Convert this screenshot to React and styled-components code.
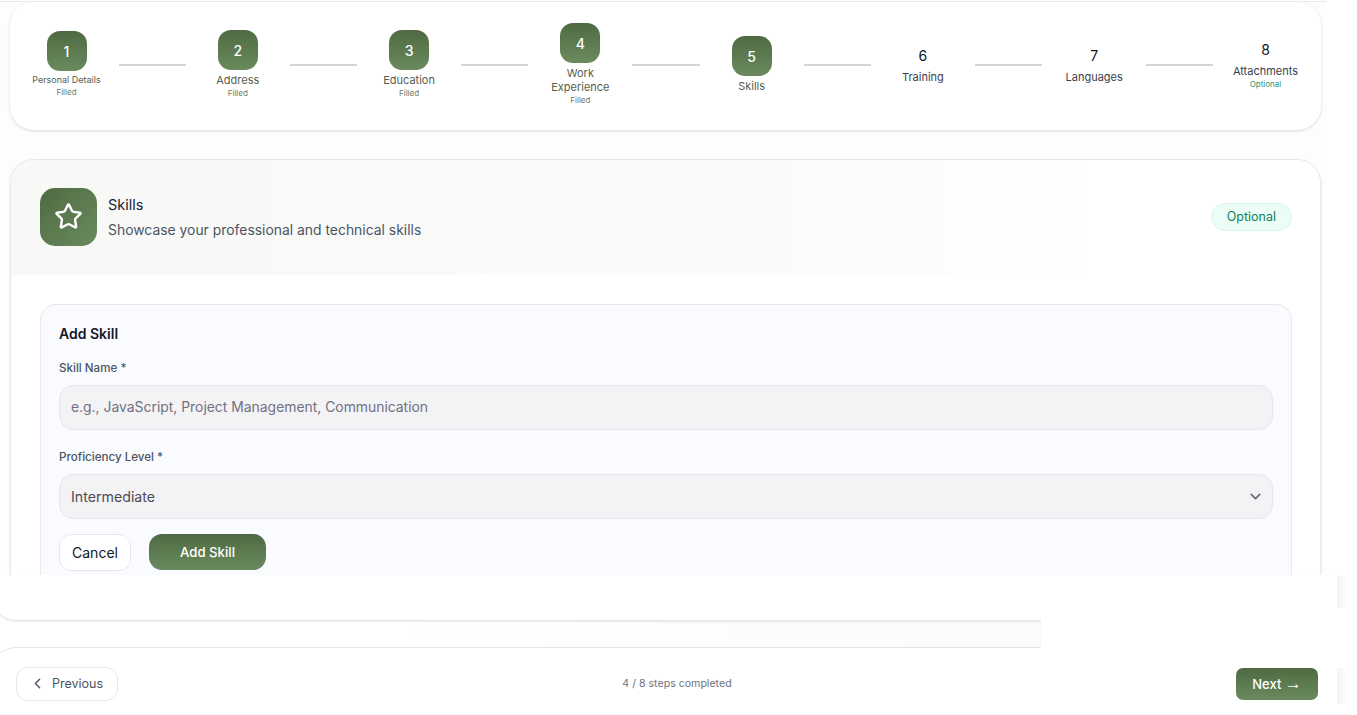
import { Fragment } from 'react';
import styled, { createGlobalStyle } from 'styled-components';
import { Star, ChevronDown, ChevronLeft } from 'lucide-react';

const GlobalStyle = createGlobalStyle`
  html, body {
    margin: 0;
    padding: 0;
    background: #fff;
    overflow: hidden;
  }
  * { box-sizing: border-box; }
  body {
    font-family: Inter, "Noto Sans", "Liberation Sans", sans-serif;
    color: #111827;
  }
`;

const green = 'linear-gradient(180deg, #4f6a42 0%, #6a8a5e 100%)';

const Page = styled.div`
  position: relative;
  width: 1357px;
  height: 715px;
  overflow: hidden;
  background: #fff;
`;

const Upper = styled.div`
  width: 1327px;
  height: 574px;
  margin-top: 1px;
  padding: 0 6px 0 10px;
  border-top: 1px solid #e6ebea;
  background: #fdfdfe;
  overflow: hidden;
`;

const StepperCard = styled.div`
  display: flex;
  align-items: center;
  height: 128px;
  padding: 0 17.5px 3px 18.5px;
  background: #fff;
  border-radius: 24px;
  box-shadow: 0 1px 3px rgba(30, 30, 60, 0.16);
`;

const Step = styled.div`
  display: flex;
  flex-direction: column;
  align-items: center;
  width: 76px;
  flex: none;
  text-align: center;
`;

const Tile = styled.div`
  display: flex;
  align-items: center;
  justify-content: center;
  width: 40px;
  height: 40px;
  border-radius: 13px;
  background: ${green};
  color: #fff;
  font-size: 14px;
  font-weight: 500;
`;

const StepNumber = styled.div`
  height: 21px;
  line-height: 20px;
  font-size: 14px;
  color: #111827;
`;

const StepLabel = styled.div`
  margin-top: 3px;
  font-size: ${p => (p.$small ? '9px' : '11px')};
  line-height: ${p => (p.$small ? '12px' : '14px')};
  color: ${p => (p.$done ? '#56604f' : '#3a4150')};
  white-space: ${p => (p.$wrap ? 'normal' : 'nowrap')};
`;

const StepNote = styled.div`
  font-size: 8px;
  line-height: 12px;
  color: ${p => (p.$optional ? '#2f9270' : '#6f7a68')};
`;

const Connector = styled.div`
  flex: 1;
  height: 2px;
  margin: 0 14px;
  background: #d4d4da;
`;

const FormCard = styled.section`
  margin-top: 29px;
  height: 460px;
  background: #fff;
  border: 1px solid #e8e8ee;
  border-radius: 24px;
  box-shadow: 0 1px 3px rgba(30, 30, 60, 0.08);
  overflow: hidden;
`;

const CardHeader = styled.header`
  display: flex;
  align-items: center;
  height: 115px;
  padding: 0 28px 2px 29px;
  background: linear-gradient(90deg, #f8f9f7 0%, #fafbfa 60%, #ffffff 82%);
`;

const IconTile = styled.div`
  display: flex;
  align-items: center;
  justify-content: center;
  width: 57px;
  height: 58px;
  border-radius: 15px;
  background: linear-gradient(135deg, #4f6a42 0%, #6a8a5e 100%);
  color: #fff;
`;

const HeaderText = styled.div`
  flex: 1;
  margin-left: 11px;
  padding-top: 1px;
`;

const CardTitle = styled.div`
  font-size: 14.5px;
  line-height: 25px;
  color: #1b2333;
`;

const CardSub = styled.div`
  margin-top: 1px;
  font-size: 13.9px;
  line-height: 25px;
  color: #4b5563;
`;

const Badge = styled.span`
  display: flex;
  align-items: center;
  height: 28px;
  padding: 0 15px;
  border-radius: 14px;
  border: 1px solid #d6f8e8;
  background: #ecfdf5;
  color: #0f7f5c;
  font-size: 12.5px;
`;

const CardBody = styled.div`
  padding: 29px 28px 0 29px;
`;

const Panel = styled.div`
  padding: 18px 18px 40px;
  background: #fafbff;
  border: 1px solid #e6e8ee;
  border-radius: 16px;
`;

const PanelTitle = styled.div`
  font-size: 14px;
  line-height: 22px;
  font-weight: 600;
  color: #111827;
`;

const Field = styled.div`
  position: relative;
  margin-top: ${p => (p.$first ? '14px' : '18px')};
`;

const FieldLabel = styled.label`
  display: block;
  margin-bottom: 8px;
  font-size: 11.6px;
  line-height: 18px;
  font-weight: 500;
  color: #4b5563;
`;

const TextInput = styled.input`
  display: block;
  width: 100%;
  height: 45px;
  padding: 0 11px 2px;
  background: #f3f3f5;
  border: 1px solid #e5e7eb;
  border-radius: 14px;
  font: 13.9px Inter, "Noto Sans", sans-serif;
  color: #4b4b57;
  outline: none;
  &::placeholder { color: #717182; opacity: 1; }
`;

const Select = styled(TextInput).attrs({ as: 'select' })`
  appearance: none;
  padding-bottom: 0;
  font-size: 14.2px;
`;

const SelectIcon = styled(ChevronDown)`
  position: absolute;
  right: 9px;
  bottom: 14px;
  color: #6b7280;
  pointer-events: none;
`;

const Actions = styled.div`
  display: flex;
  gap: 18px;
  margin-top: 15px;
`;

const GhostButton = styled.button`
  height: 37px;
  width: 72px;
  border: 1px solid #e5e7eb;
  border-radius: 12px;
  background: #fff;
  color: #111827;
  font: 14px Inter, "Noto Sans", sans-serif;
`;

const PrimaryButton = styled.button`
  height: ${p => (p.$short ? '32px' : '36px')};
  width: ${p => (p.$short ? '82px' : '117px')};
  border: none;
  border-radius: ${p => (p.$short ? '7px' : '13px')};
  background: ${green};
  color: #fff;
  font: ${p => (p.$short ? '500 13px' : '500 13.2px')} Inter, "Noto Sans", sans-serif;
`;

const Arrow = styled.span`
  font-family: "Liberation Sans", sans-serif;
  font-size: 17px;
  line-height: 13px;
`;

const Lower = styled.div`
  height: 140px;
  background: linear-gradient(90deg, #ffffff 30%, #f9f9f9 100%) no-repeat;
  background-size: 100% 73px;
`;

const CardTail = styled.div`
  width: 1346px;
  height: 46px;
  margin-left: -8px;
  background: #fff;
  border-bottom: 1px solid #e4e4ea;
  border-radius: 0 0 24px 24px;
  box-shadow: 0 1px 2px rgba(30, 30, 60, 0.08);
`;

const Footer = styled.footer`
  display: flex;
  align-items: center;
  justify-content: space-between;
  width: 1350px;
  height: 72px;
  margin: 26px 0 0 -8px;
  padding: 0 24px;
  background: #fff;
  border-top: 1px solid #e4e4ea;
  border-radius: 24px 24px 0 0;
`;

const PrevButton = styled.button`
  display: flex;
  align-items: center;
  gap: 6px;
  width: 102px;
  height: 34px;
  padding: 0 0 0 12px;
  background: #fff;
  border: 1px solid #e5e7eb;
  border-radius: 12px;
  color: #4b5563;
  font: 12.5px Inter, "Noto Sans", sans-serif;
`;

const Progress = styled.span`
  font-size: 10.6px;
  color: #6b7280;
`;

// the capture has a pale block painted over the right side of the lower cards
const WhitePatch = styled.div`
  position: absolute;
  left: 1041px;
  top: 575px;
  width: 316px;
  height: 92px;
  background: #fff;
`;

const EdgeStrip = styled.div`
  position: absolute;
  left: 1337px;
  top: ${p => p.$top}px;
  width: 8px;
  height: ${p => p.$height}px;
  background: linear-gradient(90deg, #f4f4f6 0%, #fbfbfb 100%);
`;

const steps = [
  { n: 1, label: 'Personal Details', note: 'Filled', done: true, small: true },
  { n: 2, label: 'Address', note: 'Filled', done: true },
  { n: 3, label: 'Education', note: 'Filled', done: true },
  { n: 4, label: 'Work Experience', note: 'Filled', done: true, wrap: true },
  { n: 5, label: 'Skills', done: true },
  { n: 6, label: 'Training' },
  { n: 7, label: 'Languages' },
  { n: 8, label: 'Attachments', note: 'Optional', optional: true },
];

export default function App() {
  return (
    <Page>
      <GlobalStyle />
      <Upper>
        <StepperCard>
          {steps.map((s, i) => (
            <Fragment key={s.n}>
              {i > 0 && <Connector />}
              <Step>
                {s.done ? <Tile>{s.n}</Tile> : <StepNumber>{s.n}</StepNumber>}
                <StepLabel $small={s.small} $done={s.done} $wrap={s.wrap}>{s.label}</StepLabel>
                {s.note && <StepNote $optional={s.optional}>{s.note}</StepNote>}
              </Step>
            </Fragment>
          ))}
        </StepperCard>

        <FormCard>
          <CardHeader>
            <IconTile>
              <Star size={29} strokeWidth={2} />
            </IconTile>
            <HeaderText>
              <CardTitle>Skills</CardTitle>
              <CardSub>Showcase your professional and technical skills</CardSub>
            </HeaderText>
            <Badge>Optional</Badge>
          </CardHeader>
          <CardBody>
            <Panel>
              <PanelTitle>Add Skill</PanelTitle>
              <Field $first>
                <FieldLabel>Skill Name *</FieldLabel>
                <TextInput placeholder="e.g., JavaScript, Project Management, Communication" />
              </Field>
              <Field>
                <FieldLabel>Proficiency Level *</FieldLabel>
                <Select defaultValue="Intermediate">
                  <option>Beginner</option>
                  <option>Intermediate</option>
                  <option>Advanced</option>
                  <option>Expert</option>
                </Select>
                <SelectIcon size={17} strokeWidth={2.6} />
              </Field>
              <Actions>
                <GhostButton>Cancel</GhostButton>
                <PrimaryButton>Add Skill</PrimaryButton>
              </Actions>
            </Panel>
          </CardBody>
        </FormCard>
      </Upper>

      <Lower>
        <CardTail />
        <Footer>
          <PrevButton>
            <ChevronLeft size={17} strokeWidth={2} />
            Previous
          </PrevButton>
          <Progress>4 / 8 steps completed</Progress>
          <PrimaryButton $short>Next <Arrow>→</Arrow></PrimaryButton>
        </Footer>
      </Lower>

      <WhitePatch />
      <EdgeStrip $top={576} $height={32} />
      <EdgeStrip $top={668} $height={36} />
    </Page>
  );
}
